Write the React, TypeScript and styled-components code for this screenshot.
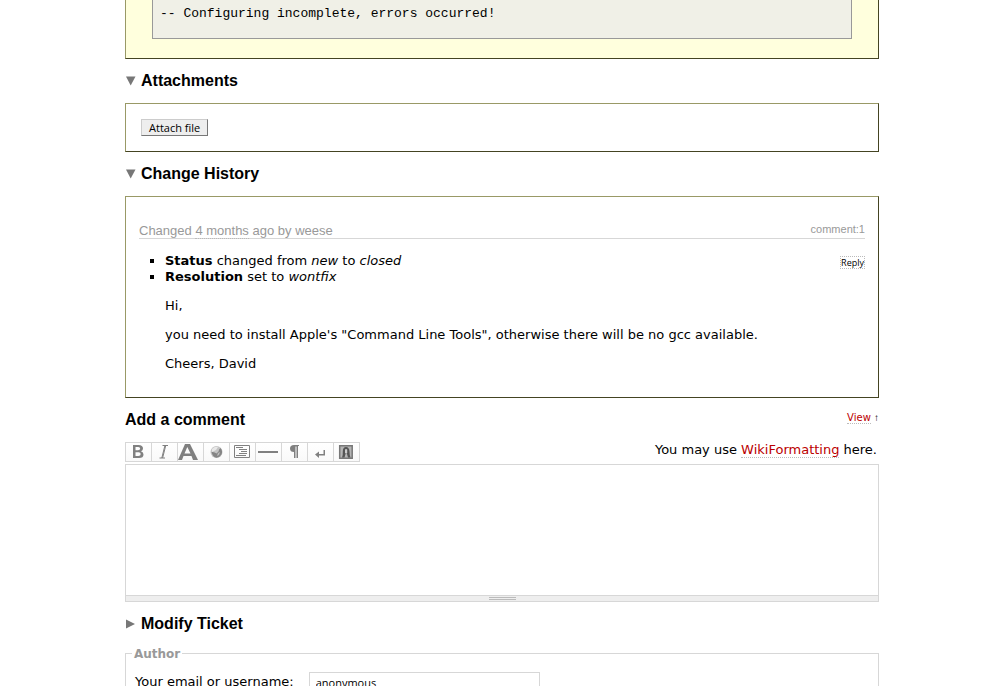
import React from 'react';
import styled, { createGlobalStyle } from 'styled-components';

const verdana = `Verdana, "DejaVu Sans", sans-serif`;
const arial = `"Liberation Sans", Arial, sans-serif`;

const GlobalStyle = createGlobalStyle`
  * { box-sizing: border-box; }
  body { margin: 0; background: #fff; color: #000; font: 13px/16px ${verdana}; }
`;

const Page = styled.main`
  height: 100vh;
  overflow: hidden;
  padding: 0 125px;
`;

const Panel = styled.section`
  border: 1px solid;
  border-color: #996 #442 #442 #996;
`;

const Description = styled(Panel)`
  border-top: 0;
  background: #ffd;
  padding: 0 26px 19px;
`;

const CodeBlock = styled.pre`
  margin: 0;
  border: 1px solid #999;
  border-top: 0;
  background: #f0f0e7;
  padding: 6px 7px 16px;
  font: 13px/16px "Liberation Mono", "Courier New", monospace;
`;

const Attachments = styled(Panel)`
  padding: 15px;
  display: flex;
`;

const AttachButton = styled.button`
  height: 17px;
  padding: 0 7px;
  border: 1px solid;
  border-color: #ccc #777 #777 #ccc;
  background: #eee;
  color: #000;
  font: 11px/15px "Open Sans", sans-serif;
`;

const Row = styled.div`
  display: flex;
  align-items: center;
  justify-content: space-between;
`;

const Heading = styled.h2`
  display: flex;
  align-items: center;
  gap: 5px;
  height: 44px;
  margin: 0;
  font: bold 16px/20px ${arial};
`;

const History = styled(Panel)`
  padding: 25px 13px;
`;

const ChangeHeader = styled(Row)`
  align-items: flex-start;
  height: 17px;
  border-bottom: 1px solid #d7d7d7;
  color: #999;
  font-family: ${arial};
`;

const ChangeTitle = styled.h3`
  margin: 0;
  font: 13px/18px ${arial};
`;

const AgeLink = styled.a`
  color: #999;
  text-decoration: none;
  border-bottom: 1px dotted #bbb;
`;

const CommentLink = styled.a`
  color: #999;
  text-decoration: none;
  font-size: 11px;
  line-height: 14px;
`;

const ChangeBody = styled.div`
  display: flex;
  justify-content: space-between;
  align-items: flex-start;
  padding-top: 14px;
`;

const ChangeText = styled.div`
  padding-left: 26px;
`;

const ChangeList = styled.ul`
  margin: 0;
  padding: 0;
  list-style: square;
`;

const Paragraph = styled.p`
  margin: 13px 0 0;
`;

const ReplyButton = styled.button`
  height: 13px;
  margin-top: 3px;
  padding: 0;
  border: 1px dotted #bbb;
  background: #fff;
  color: #000;
  font: 9px/11px "Open Sans", sans-serif;
`;

const ViewNote = styled.span`
  padding-bottom: 4px;
  font-size: 10px;
  line-height: 14px;
`;

const Arrow = styled.span`
  font-family: ${arial};
`;

const RedLink = styled.a`
  color: #b00;
  text-decoration: none;
  border-bottom: 1px dotted #bbb;
`;

const EditorBar = styled(Row)`
  align-items: flex-start;
  margin-bottom: 2px;
  padding-right: 2px;
`;

const Toolbar = styled.div`
  display: flex;
  border: 1px solid #d7d7d7;
  border-right: 0;
`;

const ToolButton = styled.button`
  display: flex;
  width: 26px;
  height: 18px;
  padding: 0;
  border: 0;
  border-right: 1px solid #d7d7d7;
  background: linear-gradient(#fff, #f9f9f9);
`;

const CommentBox = styled.textarea`
  display: block;
  width: 100%;
  height: 132px;
  border: 1px solid #d7d7d7;
  background: #fff;
  resize: none;
  outline: 0;
  padding: 2px;
`;

const Grip = styled.div`
  display: flex;
  justify-content: center;
  align-items: center;
  height: 6px;
  border: 1px solid #d7d7d7;
  border-top: 0;
  background: #eee;
`;

const GripHandle = styled.span`
  width: 27px;
  height: 3px;
  border: 1px solid #bbb;
  border-width: 1px 0;
`;

const Fieldset = styled.fieldset`
  min-height: 60px;
  margin: 0;
  padding: 11px 9px;
  border: 1px solid #d7d7d7;
`;

const Legend = styled.legend`
  margin-left: -3px;
  padding: 2px 2px 0;
  color: #999;
  font: bold 12px/13px ${verdana};
`;

const Field = styled.div`
  display: flex;
  align-items: center;
  gap: 15px;
`;

const TextInput = styled.input`
  width: 231px;
  height: 20px;
  padding: 0 6px;
  border: 1px solid #d7d7d7;
  color: #000;
  font: 11px/18px "Open Sans", sans-serif;
`;

const Triangle = ({ open }: { open?: boolean }) => (
  <svg width="11" height="10" viewBox="0 0 11 10" aria-hidden="true">
    <path d={open ? 'M1 0.5H10.5L5.7 9.5Z' : 'M1 0.5V9.5L10 5Z'} fill="#777" />
  </svg>
);

const g = '#808080';
const tools: { name: string; art: React.ReactNode }[] = [
  { name: 'Bold', art: <path fill={g} fillRule="evenodd" d="M7 2h5.500q4.500 0 4.500 3.500 0 2-2 2.700 2.500 .8 2.500 3.300 0 3.500-4.500 3.500H7ZM9.500 4v3.300h2.500q2.200 0 2.200-1.700T12 4ZM9.500 9.300V13h2.800q2.400 0 2.400-1.900t-2.400-1.800Z" /> },
  { name: 'Italic', art: <path fill="none" stroke={g} d="M10.500 2.500h5.500M7.500 15h5.500M12.800 3l-3 12M13.600 3l-3 12" /> },
  { name: 'Heading', art: <path fill={g} fillRule="evenodd" d="M0 17 7 1h5l8 16h-5l-1.500-4H5.500L4 17ZM6.500 10.500h6L9.300 4Z" /> },
  {
    name: 'Link',
    art: (
      <>
        <circle cx="12.500" cy="9" r="6" fill="#c4c4c4" />
        <path fill="#e8e8e8" d="M8 6q3-3 6-2l-2 3-4 2Z" />
        <path fill="#858585" d="M7.500 9q3-.500 5 1.500l2-2q.500-3 2-3.500 2.500 3 1 6.500-2 3-5 3.300-4-.800-5-5.800Z" />
        <path fill="#bdbdbd" d="m14 10 2-1-1 3-2 1Z" />
      </>
    ),
  },
  { name: 'Code block', art: <path fill="none" stroke={g} d="M4.500 2.500h15v12h-15ZM6 4.500h7M9 6.500h8M11 8.500h6M9 10.500h8M6 12.500h10" /> },
  { name: 'Horizontal rule', art: <path stroke={g} strokeWidth="2" d="M2 9h20" /> },
  { name: 'Paragraph', art: <path fill={g} d="M17 2v1h-1v12h-1.500V3.500h-1V15H12V9Q8 9 8 5.500T12 2Z" /> },
  { name: 'Line break', art: <path fill={g} d="M15.500 7H17v5.500h-6V15l-4-3.500L11 8.500V11h4.500Z" /> },
  {
    name: 'Image',
    art: (
      <>
        <path fill="#b5b5b5" stroke="#777" strokeWidth="1.500" d="M5.700 2.700h12.500v12.600H5.700Z" />
        <path fill="#555" d="M8 14.500q1-2 .800-6Q8.800 4 12 4t3.500 4.500q0 4 1 6h-2.500l-1-3.500h-1.500l-1 3.500Z" />
        <path fill="#ccc" d="M11 6.500q1-1 2.200 0v3.500l-1 1-1.200-1Z" />
      </>
    ),
  },
];

export default function App() {
  return (
    <Page>
      <GlobalStyle />
      <Description>
        <CodeBlock>-- Configuring incomplete, errors occurred!</CodeBlock>
      </Description>

      <Heading><Triangle open />Attachments</Heading>
      <Attachments>
        <AttachButton type="button">Attach file</AttachButton>
      </Attachments>

      <Heading><Triangle open />Change History</Heading>
      <History>
        <ChangeHeader>
          <ChangeTitle>
            Changed <AgeLink href="#timeline">4 months</AgeLink> ago by weese
          </ChangeTitle>
          <CommentLink href="#comment-1">comment:1</CommentLink>
        </ChangeHeader>
        <ChangeBody>
          <ChangeText>
            <ChangeList>
              <li><strong>Status</strong> changed from <em>new</em> to <em>closed</em></li>
              <li><strong>Resolution</strong> set to <em>wontfix</em></li>
            </ChangeList>
            <Paragraph>Hi,</Paragraph>
            <Paragraph>
              you need to install Apple's "Command Line Tools", otherwise there will be no gcc available.
            </Paragraph>
            <Paragraph>Cheers, David</Paragraph>
          </ChangeText>
          <ReplyButton type="button">Reply</ReplyButton>
        </ChangeBody>
      </History>

      <Row>
        <Heading as="label" htmlFor="comment">Add a comment</Heading>
        <ViewNote><RedLink href="#view">View</RedLink> <Arrow>↑</Arrow></ViewNote>
      </Row>
      <EditorBar>
        <Toolbar>
          {tools.map((t) => (
            <ToolButton key={t.name} type="button" aria-label={t.name}>
              <svg width="25" height="18" viewBox="0 0 25 18" aria-hidden="true">{t.art}</svg>
            </ToolButton>
          ))}
        </Toolbar>
        <span>You may use <RedLink href="#wiki">WikiFormatting</RedLink> here.</span>
      </EditorBar>
      <CommentBox id="comment" />
      <Grip><GripHandle /></Grip>

      <Heading><Triangle />Modify Ticket</Heading>
      <Fieldset>
        <Legend>Author</Legend>
        <Field>
          <label htmlFor="author">Your email or username:</label>
          <TextInput id="author" defaultValue="anonymous" />
        </Field>
      </Fieldset>
    </Page>
  );
}
